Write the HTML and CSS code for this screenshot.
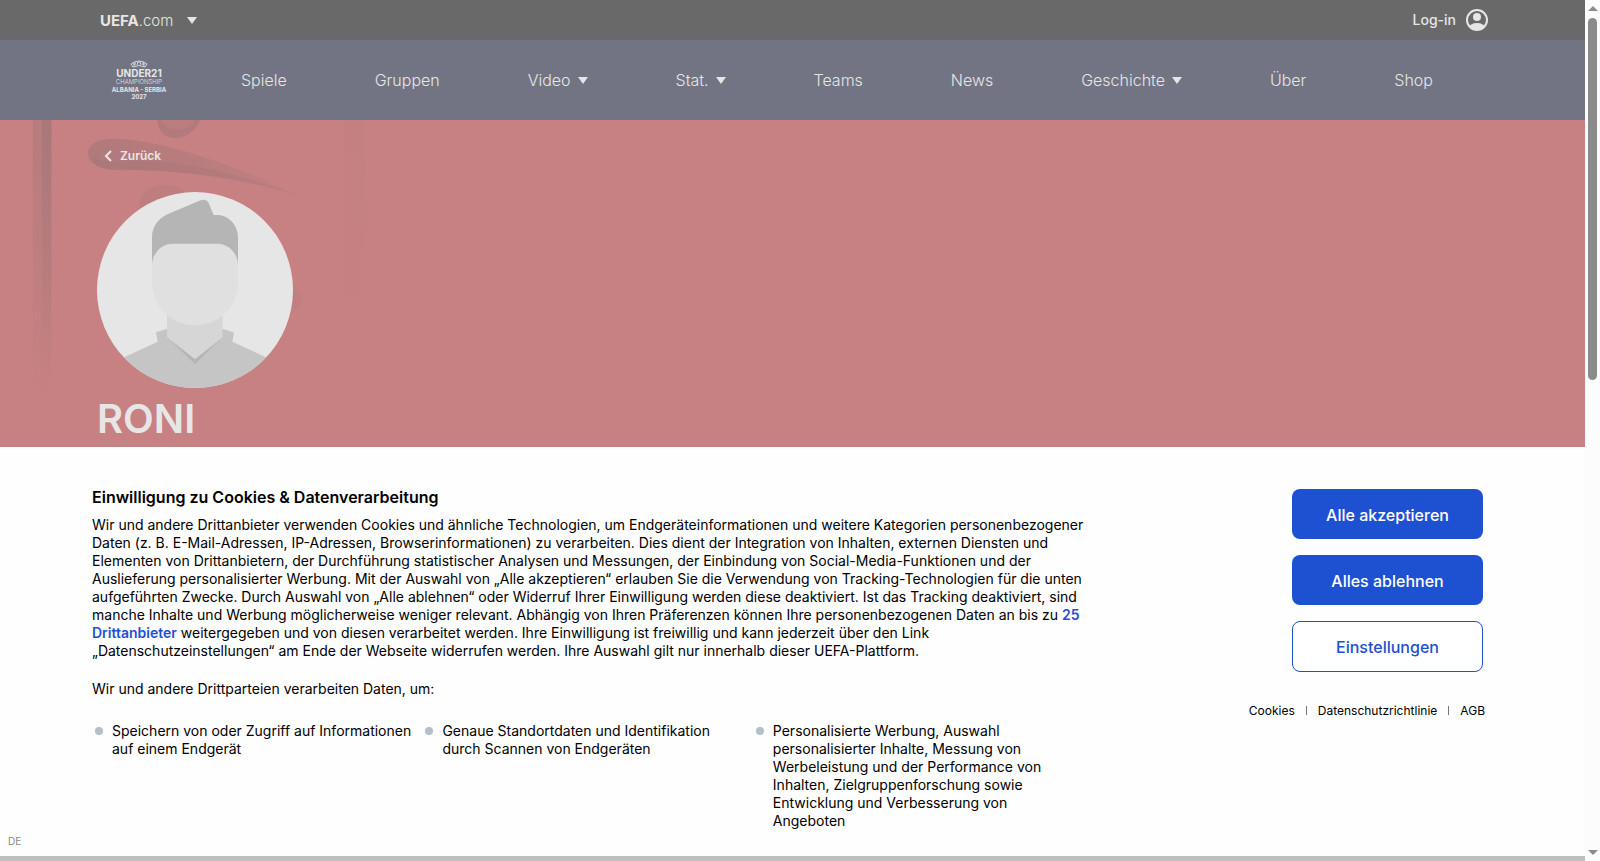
FILE: index.html
```html
<!DOCTYPE html>
<html lang="de">
  <head>
    <meta charset="UTF-8" />
    <meta name="viewport" content="width=device-width, initial-scale=1.0" />
    <title>Roni | UEFA.com</title>
    <link rel="stylesheet" href="styles.css">
  </head>
  <body>
    <div class="page">
      <header class="topbar">
        <button class="site-btn" aria-label="UEFA.com Seiten">
          <span class="site-logo"><b>UEFA</b>.com</span>
          <span class="caret"></span>
        </button>
        <a class="login" href="#">
          Log-in
          <svg width="22" height="22" viewBox="0 0 22 22" aria-hidden="true">
            <defs>
              <clipPath id="user_clip"><circle cx="11" cy="11" r="10" /></clipPath>
            </defs>
            <circle cx="11" cy="11" r="10" fill="none" stroke="#e6e6e6" stroke-width="2" />
            <circle cx="11" cy="8" r="4" fill="#e6e6e6" />
            <ellipse cx="11" cy="19" rx="8" ry="5" fill="#e6e6e6" clip-path="url(#user_clip)" />
          </svg>
        </a>
      </header>

      <div class="navbar">
        <a class="nav-logo" href="#">
          <svg width="60" height="40" viewBox="0 0 60 40">
            <g fill="none" stroke="#d5d5da" stroke-width="1">
              <path d="M24 7 L22 4 Q30 -2 38 4 L36 7" />
              <path d="M24 7 Q30 4 36 7 M26 2 L25 6 M34 2 L35 6 M28 5 L29 2 L31 2 L32 5 M24 4 H27 M33 4 H36" />
            </g>
            <text class="logo-main" x="30" y="17">UNDER21</text>
            <text class="logo-thin" x="30" y="24">CHAMPIONSHIP</text>
            <text class="logo-host" x="30" y="32">ALBANIA - SERBIA</text>
            <text class="logo-host" x="30" y="39">2027</text>
          </svg>
        </a>
        <nav class="nav">
          <a href="#">Spiele</a>
          <a href="#">Gruppen</a>
          <a href="#">Video <span class="caret"></span></a>
          <a href="#">Stat. <span class="caret"></span></a>
          <a href="#">Teams</a>
          <a href="#">News</a>
          <a href="#">Geschichte <span class="caret"></span></a>
          <a href="#">Über</a>
          <a href="#">Shop</a>
        </nav>
      </div>

      <main class="hero">
        <svg class="hero-bg" width="400" height="327" viewBox="0 0 1200 981" aria-hidden="true">
          <defs>
            <linearGradient id="fade" x1="0" y1="0" x2="0" y2="1">
              <stop offset="0" stop-color="#6b6468" stop-opacity="0.36" />
              <stop offset="0.5" stop-color="#6b6468" stop-opacity="0.2" />
              <stop offset="1" stop-color="#6b6468" stop-opacity="0" />
            </linearGradient>
            <linearGradient id="swoosh" x1="0" y1="0" x2="1" y2="0">
              <stop offset="0" stop-color="#6b6468" stop-opacity="0.26" />
              <stop offset="1" stop-color="#6b6468" stop-opacity="0.06" />
            </linearGradient>
          </defs>
          <rect x="98" y="0" width="57" height="880" fill="url(#fade)" opacity="0.5" />
          <rect x="126" y="0" width="28" height="780" fill="url(#fade)" opacity="0.5" />
          <path d="M264 100 C264 70 300 55 340 56 C480 58 700 130 895 228 C700 165 500 148 345 149 C300 149 264 130 264 100Z" fill="url(#swoosh)" />
          <path d="M282 108 C300 134 340 122 400 122 C560 120 730 165 895 228 C700 165 500 148 345 149 C300 149 272 134 282 108Z" fill="#6b6468" opacity="0.09" />
          <path d="M471 0 C475 35 495 54 525 54 C560 54 590 30 600 0Z" fill="#6b6468" opacity="0.24" />
          <path d="M485 0 C490 20 510 28 530 28 C555 28 575 20 585 0Z" fill="#c88182" opacity="0.4" />
          <path d="M415 265 C420 215 450 194 490 194 C530 194 550 205 565 225 L430 290Z" fill="#6b6468" opacity="0.1" />
          <ellipse cx="885" cy="537" rx="20" ry="30" fill="#6b6468" opacity="0.06" />
          <rect x="1030" y="0" width="66" height="770" fill="url(#fade)" opacity="0.12" />
        </svg>
        <a class="back" href="#">
          <svg width="8" height="12" viewBox="0 0 8 12" aria-hidden="true">
            <path d="M7 1 L2 6 L7 11" fill="none" stroke="#e6e6e6" stroke-width="2" />
          </svg>
          Zurück
        </a>
        <svg class="avatar" width="196" height="196" viewBox="0 0 588 588" role="img" aria-label="Roni">
          <defs>
            <clipPath id="avatar_clip"><circle cx="294" cy="294" r="294" /></clipPath>
          </defs>
          <g clip-path="url(#avatar_clip)">
            <rect width="588" height="588" fill="#e6e6e6" />
            <path d="M0 533 L182 449 L177 421 L210 411 H377 L411 421 L406 449 L588 533 V588 H0Z" fill="#c5c5c5" />
            <path d="M210 434 L294 517 L377 434Z" fill="#b5b5b5" />
            <path d="M210 350 V436 L294 502 L377 436 V350Z" fill="#d6d6d6" />
            <path d="M165 218 V135 C165 105 185 77 213 66 L311 25 Q327 19 334 31 L350 69 H360 C395 69 423 100 423 135 V218Z" fill="#b5b5b5" />
            <path d="M165 216 C168 180 195 155 228 155 H360 C393 155 420 180 423 216 V270 C423 345 365 400 294 400 S165 345 165 270Z" fill="#e0e0e0" />
          </g>
        </svg>
        <h1 class="player-name">RONI</h1>
      </main>

      <section class="consent" aria-labelledby="consent_title">
        <div class="consent-text">
          <h2 class="consent-title" id="consent_title">Einwilligung zu Cookies &amp; Datenverarbeitung</h2>
          <p>
            Wir und andere Drittanbieter verwenden Cookies und ähnliche Technologien, um Endgeräteinformationen und weitere Kategorien personenbezogener<br />
            Daten (z. B. E-Mail-Adressen, IP-Adressen, Browserinformationen) zu verarbeiten. Dies dient der Integration von Inhalten, externen Diensten und<br />
            Elementen von Drittanbietern, der Durchführung statistischer Analysen und Messungen, der Einbindung von Social-Media-Funktionen und der<br />
            Auslieferung personalisierter Werbung. Mit der Auswahl von „Alle akzeptieren“ erlauben Sie die Verwendung von Tracking-Technologien für die unten<br />
            aufgeführten Zwecke. Durch Auswahl von „Alle ablehnen“ oder Widerruf Ihrer Einwilligung werden diese deaktiviert. Ist das Tracking deaktiviert, sind<br />
            manche Inhalte und Werbung möglicherweise weniger relevant. Abhängig von Ihren Präferenzen können Ihre personenbezogenen Daten an bis zu <a href="#">25<br />
            Drittanbieter</a> weitergegeben und von diesen verarbeitet werden. Ihre Einwilligung ist freiwillig und kann jederzeit über den Link<br />
            „Datenschutzeinstellungen“ am Ende der Webseite widerrufen werden. Ihre Auswahl gilt nur innerhalb dieser UEFA-Plattform.
          </p>
          <p>Wir und andere Drittparteien verarbeiten Daten, um:</p>
          <ul class="purposes">
            <li>Speichern von oder Zugriff auf Informationen<br />auf einem Endgerät</li>
            <li>Genaue Standortdaten und Identifikation<br />durch Scannen von Endgeräten</li>
            <li>Personalisierte Werbung, Auswahl<br />personalisierter Inhalte, Messung von<br />Werbeleistung und der Performance von<br />Inhalten, Zielgruppenforschung sowie<br />Entwicklung und Verbesserung von<br />Angeboten</li>
          </ul>
        </div>
        <div class="consent-actions">
          <button class="btn">Alle akzeptieren</button>
          <button class="btn">Alles ablehnen</button>
          <button class="btn btn-outline">Einstellungen</button>
          <div class="legal">
            <a href="#">Cookies</a>
            <a href="#">Datenschutzrichtlinie</a>
            <a href="#">AGB</a>
          </div>
        </div>
        <span class="lang">DE</span>
      </section>
      <div class="page-rest"></div>
    </div>

    <div class="scrollbar" aria-hidden="true">
      <span class="arrow arrow-up"></span>
      <span class="thumb"></span>
      <span class="arrow arrow-down"></span>
    </div>
  </body>
</html>
```
FILE: styles.css
```css
* {
  box-sizing: border-box;
  margin: 0;
  padding: 0;
}
body {
  display: flex;
  min-height: 100vh;
  font-family: Inter, 'Liberation Sans', sans-serif;
  font-size: 14px;
  line-height: 18px;
  color: #000;
  background: #fefefe;
}
a {
  color: inherit;
  text-decoration: none;
}
button {
  font-family: inherit;
  border: none;
  cursor: pointer;
}
.page {
  flex: 1;
  min-width: 0;
  display: flex;
  flex-direction: column;
}
.caret {
  display: inline-block;
  border: 5px solid transparent;
  border-top: 7px solid #e6e6e6;
  border-bottom: 0;
}

/* header */
.topbar {
  display: flex;
  justify-content: space-between;
  align-items: center;
  height: 40px;
  padding: 0 97px 0 100px;
  background: #696969;
  color: #e6e6e6;
}
.site-btn {
  display: flex;
  align-items: center;
  gap: 14px;
  background: none;
  color: inherit;
}
.site-logo {
  font-size: 15px;
  font-weight: 300;
}
.site-logo b {
  font-weight: 700;
}
.login {
  display: flex;
  align-items: center;
  gap: 10px;
  font-weight: 500;
}
.navbar {
  display: flex;
  align-items: center;
  height: 80px;
  padding: 0 152px 0 109px;
  background: #727483;
  color: #e6e6e6;
}
.nav-logo {
  display: flex;
  margin-right: 72px;
}
.nav-logo text {
  fill: #e6e6e6;
  text-anchor: middle;
}
.logo-main {
  font-size: 10px;
  font-weight: 700;
}
.logo-thin {
  font-size: 6px;
  font-weight: 300;
}
.logo-host {
  font-size: 6px;
  font-weight: 700;
}
.nav {
  flex: 1;
  display: flex;
  justify-content: space-between;
  font-size: 16px;
  font-weight: 300;
}
.nav a {
  display: flex;
  align-items: center;
  gap: 7px;
}

/* player */
.hero {
  position: relative;
  flex: 1;
  display: flex;
  flex-direction: column;
  align-items: flex-start;
  min-height: 327px;
  padding: 27px 97px 0;
  background: #c88182;
  color: #e6e6e6;
}
.hero-bg {
  position: absolute;
  top: 0;
  left: 0;
}
.back,
.avatar,
.player-name {
  position: relative;
}
.back {
  display: flex;
  align-items: center;
  gap: 8px;
  padding-left: 7px;
  margin-bottom: 27px;
  font-size: 12px;
  font-weight: 600;
}
.player-name {
  margin-top: 7px;
  font-size: 40px;
  font-weight: 600;
  line-height: 48px;
}

/* cookie banner */
.consent {
  position: relative;
  display: flex;
  justify-content: space-between;
  padding: 40px 100px 26px 92px;
}
.consent-text {
  flex: 0 1 990px;
}
.consent-title {
  margin-bottom: 9px;
  font-size: 16px;
  font-weight: 600;
  line-height: 20px;
}
.consent-text p {
  margin-bottom: 20px;
  white-space: nowrap;
}
.consent-text p a {
  color: #1e50d2;
  font-weight: 600;
}
.purposes {
  display: grid;
  grid-template-columns: repeat(3, 1fr);
  padding-top: 4px;
  list-style: none;
}
.purposes li {
  position: relative;
  padding-left: 20px;
  white-space: nowrap;
}
.purposes li::before {
  content: '';
  position: absolute;
  top: 5px;
  left: 3px;
  width: 8px;
  height: 8px;
  border-radius: 50%;
  background: #b4c0c8;
}
.consent-actions {
  display: flex;
  flex-direction: column;
  align-items: flex-end;
  gap: 16px;
  padding-top: 2px;
}
.btn {
  width: 191px;
  padding: 17px 8px 15px;
  border-radius: 8px;
  background: #1e50d2;
  color: #fff;
  font-size: 16px;
  font-weight: 500;
  line-height: 18px;
  margin-right: 2px;
}
.btn-outline {
  padding-top: 16px;
  border: 1px solid #1e50d2;
  background: #fff;
  color: #1e50d2;
}
.legal {
  display: flex;
  margin-top: 14px;
  font-size: 12px;
}
.legal a + a::before {
  content: '';
  display: inline-block;
  height: 9px;
  margin: 0 11px;
  border-left: 1px solid #777;
}
.lang {
  position: absolute;
  left: 8px;
  bottom: 6px;
  color: #888;
  font-size: 10px;
}
.page-rest {
  height: 5px;
  background: #bfbfbf;
}

/* scrollbar */
.scrollbar {
  display: flex;
  flex-direction: column;
  align-items: center;
  width: 15px;
  padding: 6px 0;
  background: #fcfcfc;
}
.arrow {
  border: 5px solid transparent;
}
.arrow-up {
  border-top: 0;
  border-bottom-color: #8b8b8b;
}
.arrow-down {
  margin-top: auto;
  border-bottom: 0;
  border-top-color: #8b8b8b;
}
.thumb {
  width: 9px;
  height: 42vh;
  margin-top: 7px;
  border-radius: 5px;
  background: #8b8b8b;
}
```
